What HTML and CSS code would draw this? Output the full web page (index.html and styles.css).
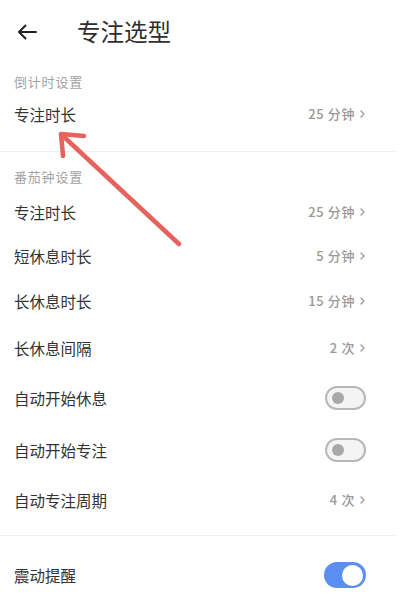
FILE: index.html
```html
<!DOCTYPE html>
<html lang="zh">
<head>
<meta charset="utf-8">
<link rel="stylesheet" href="styles.css">
</head>
<body>
<div class="page">
  <header class="topbar">
    <svg class="back" width="20" height="16" viewBox="0 0 20 16"><path d="M19 8 H2 M8.5 1.5 L2 8 L8.5 14.5" fill="none" stroke="#222" stroke-width="2" stroke-linecap="round" stroke-linejoin="round"/></svg>
    <h1 class="title">专注选型</h1>
  </header>

  <section class="group group-first">
    <div class="label">倒计时设置</div>
    <div class="row"><span class="name">专注时长</span><span class="value">25 分钟<svg class="chev" width="5" height="8" viewBox="0 0 5 8"><path d="M1 1 L4 4 L1 7" fill="none" stroke="#999" stroke-width="1.3" stroke-linecap="round" stroke-linejoin="round"/></svg></span></div>
  </section>

  <section class="group group-second">
    <div class="label label-second">番茄钟设置</div>
    <div class="row"><span class="name">专注时长</span><span class="value">25 分钟<svg class="chev" width="5" height="8" viewBox="0 0 5 8"><path d="M1 1 L4 4 L1 7" fill="none" stroke="#999" stroke-width="1.3" stroke-linecap="round" stroke-linejoin="round"/></svg></span></div>
    <div class="row"><span class="name">短休息时长</span><span class="value">5 分钟<svg class="chev" width="5" height="8" viewBox="0 0 5 8"><path d="M1 1 L4 4 L1 7" fill="none" stroke="#999" stroke-width="1.3" stroke-linecap="round" stroke-linejoin="round"/></svg></span></div>
    <div class="row row-md"><span class="name">长休息时长</span><span class="value">15 分钟<svg class="chev" width="5" height="8" viewBox="0 0 5 8"><path d="M1 1 L4 4 L1 7" fill="none" stroke="#999" stroke-width="1.3" stroke-linecap="round" stroke-linejoin="round"/></svg></span></div>
    <div class="row row-lg"><span class="name">长休息间隔</span><span class="value">2 次<svg class="chev" width="5" height="8" viewBox="0 0 5 8"><path d="M1 1 L4 4 L1 7" fill="none" stroke="#999" stroke-width="1.3" stroke-linecap="round" stroke-linejoin="round"/></svg></span></div>
    <div class="row row-switch"><span class="name">自动开始休息</span><span class="switch"><span class="knob"></span></span></div>
    <div class="row row-switch"><span class="name">自动开始专注</span><span class="switch"><span class="knob"></span></span></div>
    <div class="row row-lg"><span class="name">自动专注周期</span><span class="value">4 次<svg class="chev" width="5" height="8" viewBox="0 0 5 8"><path d="M1 1 L4 4 L1 7" fill="none" stroke="#999" stroke-width="1.3" stroke-linecap="round" stroke-linejoin="round"/></svg></span></div>
  </section>

  <section class="group group-third">
    <div class="row row-switch"><span class="name">震动提醒</span><span class="switch switch-on"><span class="knob"></span></span></div>
  </section>

  <svg class="annot" width="410" height="614" viewBox="0 0 410 614">
    <g fill="none" stroke="#e5625d" stroke-width="4.5" stroke-linecap="round" stroke-linejoin="round">
      <path d="M179 244 L63 136"/>
      <path d="M84 136 L61 134 L63 156"/>
    </g>
  </svg>
</div>
</body>
</html>
```

FILE: styles.css
```css
html, body {
  margin: 0;
  padding: 0;
  background: #fff;
}
body {
  font-family: "Noto Sans CJK SC", "Noto Sans", sans-serif;
  color: #333;
}
.page {
  position: relative;
  width: 410px;
  height: 614px;
  overflow: hidden;
}
.topbar {
  height: 64px;
  display: flex;
  align-items: center;
  padding-left: 17px;
}
.back {
  display: block;
  margin-top: -1px;
}
.title {
  margin: -2px 0 0 40px;
  font-size: 23.5px;
  font-weight: 400;
  line-height: 30px;
  color: #2e2e2e;
}
.group {
  width: 396px;
  border-bottom: 1px solid #f0f0f0;
}
.group-first {
  padding-top: 8px;
  padding-bottom: 15px;
}
.group-second {
  padding-top: 15px;
  padding-bottom: 11px;
}
.group-third {
  border-bottom: none;
  padding-top: 13px;
}
.label {
  height: 20px;
  line-height: 20px;
  padding-left: 14px;
  font-size: 13px;
  letter-spacing: 0.8px;
  color: #a3a3a3;
}
.label-second {
  margin-bottom: 3px;
}
.row {
  height: 44px;
  display: flex;
  align-items: center;
  justify-content: space-between;
  padding-left: 14px;
  padding-right: 31px;
}
.row-md { height: 46px; }
.row-lg { height: 48px; }
.row-switch { height: 52px; }
.name {
  font-size: 15.5px;
  color: #333;
  line-height: 20px;
}
.value {
  display: flex;
  align-items: center;
  font-size: 13px;
  font-weight: 500;
  letter-spacing: 0.6px;
  color: #999;
  line-height: 18px;
}
.chev {
  display: block;
  margin-left: 5px;
}
.switch {
  position: relative;
  box-sizing: border-box;
  width: 41px;
  height: 24px;
  border: 2px solid #b8b8b8;
  border-radius: 12px;
  background: #f4f4f4;
  margin-right: -1px;
}
.switch .knob {
  position: absolute;
  left: 5px;
  top: 4px;
  width: 12px;
  height: 12px;
  border-radius: 50%;
  background: #a8a8a8;
}
.switch-on {
  height: 26px;
  width: 42px;
  border: none;
  border-radius: 13px;
  background: #5a8ef2;
}
.switch-on .knob {
  left: auto;
  right: 3px;
  top: 3px;
  width: 21px;
  height: 21px;
  top: 2.5px;
  background: #fff;
}
.annot {
  position: absolute;
  left: 0;
  top: 0;
  pointer-events: none;
}
```
